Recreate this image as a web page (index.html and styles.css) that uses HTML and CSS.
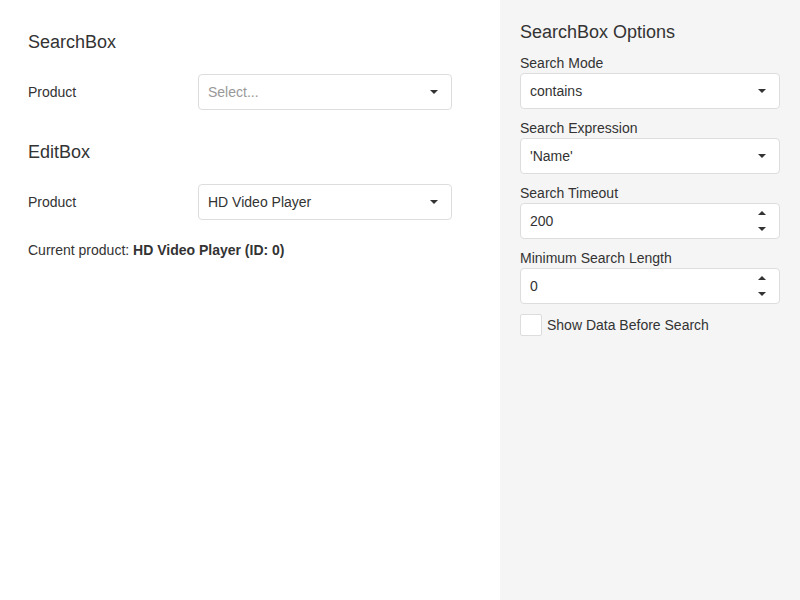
FILE: index.html
```html
<!DOCTYPE html>
<html>
<head>
<meta charset="utf-8">
<link rel="stylesheet" href="styles.css">
</head>
<body>
<div class="page">
  <div class="demo">
    <section class="group">
      <div class="group-title">SearchBox</div>
      <div class="field">
        <div class="field-label">Product</div>
        <div class="box select">
          <span class="placeholder">Select...</span>
          <span class="caret"></span>
        </div>
      </div>
    </section>
    <section class="group">
      <div class="group-title">EditBox</div>
      <div class="field">
        <div class="field-label">Product</div>
        <div class="box select">
          <span class="value">HD Video Player</span>
          <span class="caret"></span>
        </div>
      </div>
      <div class="current">Current product: <b>HD Video Player (ID: 0)</b></div>
    </section>
  </div>
  <div class="options">
    <div class="options-title">SearchBox Options</div>
    <div class="option">
      <div class="option-label">Search Mode</div>
      <div class="box select">
        <span class="value">contains</span>
        <span class="caret"></span>
      </div>
    </div>
    <div class="option">
      <div class="option-label">Search Expression</div>
      <div class="box select">
        <span class="value">'Name'</span>
        <span class="caret"></span>
      </div>
    </div>
    <div class="option">
      <div class="option-label">Search Timeout</div>
      <div class="box number">
        <span class="value">200</span>
        <span class="spins"><span class="up"></span><span class="down"></span></span>
      </div>
    </div>
    <div class="option">
      <div class="option-label">Minimum Search Length</div>
      <div class="box number">
        <span class="value">0</span>
        <span class="spins"><span class="up"></span><span class="down"></span></span>
      </div>
    </div>
    <div class="check-row">
      <span class="checkbox"></span>
      <span class="check-label">Show Data Before Search</span>
    </div>
  </div>
</div>
</body>
</html>
```
FILE: styles.css
```css
html, body {
  margin: 0;
  padding: 0;
  height: 100%;
}
body {
  font-family: "Liberation Sans", Arial, Helvetica, sans-serif;
  font-size: 14px;
  color: #333;
  background: #fff;
}
.page {
  display: flex;
  height: 600px;
}
.demo {
  width: 500px;
  box-sizing: border-box;
  padding: 30px 48px 0 28px;
}
.group {
  margin-bottom: 30px;
}
.group-title {
  font-size: 18px;
  line-height: 24px;
  margin-bottom: 20px;
}
.field {
  display: flex;
  align-items: center;
}
.field-label {
  width: 170px;
  flex: none;
}
.field .box {
  flex: 1;
}
.box {
  box-sizing: border-box;
  height: 36px;
  border: 1px solid #ddd;
  border-radius: 4px;
  background: #fff;
  display: flex;
  align-items: center;
  padding: 0 0 0 9px;
}
.box .value, .box .placeholder {
  flex: 1;
}
.placeholder {
  color: #999;
}
.caret {
  width: 34px;
  height: 34px;
  display: flex;
  align-items: center;
  justify-content: center;
}
.caret::after {
  content: "";
  border-left: 4px solid transparent;
  border-right: 4px solid transparent;
  border-top: 4px solid #333;
}
.current {
  margin-top: 22px;
}
.options {
  width: 300px;
  background: #f5f5f5;
  box-sizing: border-box;
  padding: 20px 20px 0 20px;
}
.options-title {
  font-size: 18px;
  line-height: 24px;
  margin-bottom: 9px;
}
.option {
  margin-bottom: 9px;
}
.option-label {
  line-height: 20px;
}
.spins {
  width: 26px;
  height: 34px;
  display: flex;
  flex-direction: column;
  align-items: center;
  justify-content: space-between;
  padding: 7px 0;
  box-sizing: border-box;
  margin-right: 4px;
}
.up {
  border-left: 4px solid transparent;
  border-right: 4px solid transparent;
  border-bottom: 4px solid #333;
}
.down {
  border-left: 4px solid transparent;
  border-right: 4px solid transparent;
  border-top: 4px solid #333;
}
.check-row {
  display: flex;
  align-items: center;
  margin-top: 10px;
}
.checkbox {
  width: 22px;
  height: 22px;
  box-sizing: border-box;
  border: 1px solid #ddd;
  border-radius: 2px;
  background: #fff;
  margin-right: 5px;
}
```
